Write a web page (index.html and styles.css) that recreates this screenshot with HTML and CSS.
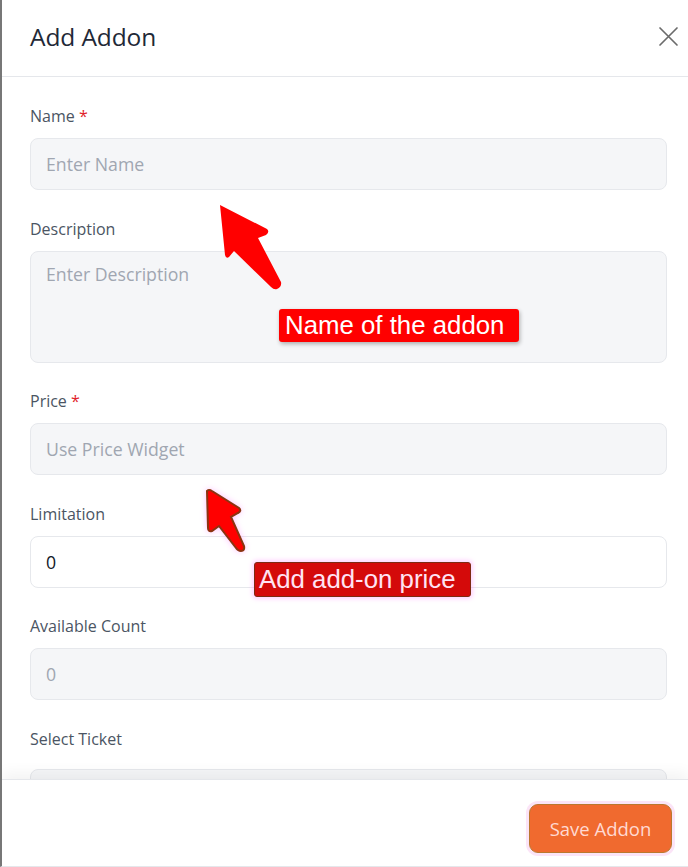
FILE: index.html
```html
<!DOCTYPE html>
<html lang="en">
<head>
    <meta charset="UTF-8">
    <title>Add Addon</title>
    <link rel="stylesheet" href="styles.css">
</head>
<body>
    <div class="modal">
        <div class="modal-header">
            <h2 class="modal-title">Add Addon</h2>
            <button class="close-btn" aria-label="Close">
                <svg width="22" height="22" viewBox="0 0 22 22">
                    <path d="M3 3 L20 20 M20 3 L3 20" stroke="#6b6b6b" stroke-width="1.7" fill="none" stroke-linecap="round"/>
                </svg>
            </button>
        </div>

        <div class="modal-body">
            <div class="field">
                <label>Name <span class="req">*</span></label>
                <input type="text" class="input" placeholder="Enter Name">
            </div>
            <div class="field">
                <label>Description</label>
                <textarea class="input textarea" placeholder="Enter Description"></textarea>
            </div>
            <div class="field">
                <label>Price <span class="req">*</span></label>
                <input type="text" class="input" placeholder="Use Price Widget">
            </div>
            <div class="field">
                <label>Limitation</label>
                <input type="text" class="input input-white" value="0">
            </div>
            <div class="field">
                <label>Available Count</label>
                <input type="text" class="input input-muted" value="0" readonly>
            </div>
            <div class="field">
                <label>Select Ticket</label>
                <div class="input select-box"></div>
            </div>
        </div>

        <div class="modal-footer">
            <button class="save-btn">Save Addon</button>
        </div>
    </div>

    <!-- annotation layer -->
    <svg class="arrows" width="688" height="867" viewBox="0 0 688 867">
        <path d="M220 205 L267 229 Q270 232 266 235 L258 238 L281 282 Q282 287 277 289 Q274 290 271 287 L234 251 L229 257 Q226 259 225 255 Z" fill="#ff0000"/>
        <path class="arrow-dark" d="M207 491 Q209 489 212 491 L239 508 Q242 511 238 513 L231 517 L244 546 Q245 551 241 551 Q238 551 236 548 L219 526 L212 531 Q208 532 208 528 Z" fill="#ff0000" stroke="#8a3410" stroke-width="2"/>
    </svg>
    <div class="note note-name">Name of the addon</div>
    <div class="note note-price">Add add-on price</div>
</body>
</html>
```

FILE: styles.css
```css
* {
    box-sizing: border-box;
}

body {
    margin: 0;
    background: #ffffff;
    font-family: 'Open Sans', 'Noto Sans', sans-serif;
    color: #4b5563;
}

.modal {
    height: 867px;
    border-left: 2px solid #777777;
    border-bottom: 1px solid #e5e7eb;
    display: flex;
    flex-direction: column;
    overflow: hidden;
}

.modal-header {
    height: 77px;
    flex-shrink: 0;
    display: flex;
    align-items: center;
    justify-content: space-between;
    padding: 0 8px 4px 28px;
    border-bottom: 1px solid #e5e7eb;
}

.modal-title {
    margin: 0;
    font-size: 24.5px;
    font-weight: 400;
    color: #1f2937;
    letter-spacing: -0.1px;
}

.close-btn {
    background: none;
    border: none;
    padding: 0;
    width: 24px;
    height: 24px;
    display: flex;
    align-items: center;
    justify-content: center;
    cursor: pointer;
}

.modal-body {
    flex: 1;
    overflow: hidden;
    padding: 29px 21px 0 28px;
}

.field {
    margin-bottom: 28.6px;
}

.field label {
    display: block;
    font-size: 16px;
    line-height: 20px;
    margin-bottom: 12px;
    color: #4b5563;
}

.req {
    color: #e11d2a;
}

.input {
    display: block;
    width: 100%;
    height: 52px;
    padding: 0 15px;
    border: 1px solid #e6e8ec;
    border-radius: 8px;
    background: #f5f6f8;
    font-family: inherit;
    font-size: 17.7px;
    color: #111827;
    outline: none;
}

.input::placeholder {
    color: #a0a6b1;
}

.textarea {
    height: 112px;
    padding-top: 10px;
    resize: none;
}

.input-white {
    background: #ffffff;
}

.input-muted {
    color: #a0a6b1;
}

.select-box {
    margin-top: 20px;
}

.modal-footer {
    height: 87px;
    flex-shrink: 0;
    display: flex;
    align-items: flex-start;
    justify-content: flex-end;
    padding: 24px 16px 0 0;
    border-top: 1px solid #e5e7eb;
    background: #ffffff;
    box-shadow: 0 -6px 14px rgba(0, 0, 0, 0.05);
    position: relative;
}

.save-btn {
    width: 143px;
    height: 49px;
    border: 1px solid #b9792f;
    border-radius: 9px;
    background: #f06a2f;
    color: #ffd9d2;
    font-family: inherit;
    font-size: 18.5px;
    font-weight: 500;
    box-shadow: 0 0 0 3px #fbe4f7;
    cursor: pointer;
}

/* annotations */
.arrows {
    position: absolute;
    top: 0;
    left: 0;
    pointer-events: none;
}

.arrow-dark {
    filter: drop-shadow(0 0 3px rgba(255, 120, 255, 0.45));
}

.note {
    position: absolute;
    font-family: 'Liberation Sans', Arial, sans-serif;
    font-size: 25.8px;
    line-height: 33px;
    white-space: nowrap;
}

.note-name {
    left: 279px;
    top: 309px;
    width: 240px;
    padding-left: 6px;
    background: #ff0000;
    color: #ffffff;
    border-radius: 3px;
    box-shadow: 1px 2px 4px rgba(0, 0, 0, 0.3);
}

.note-price {
    left: 254px;
    top: 562px;
    width: 217px;
    height: 35px;
    padding-left: 4px;
    background: #d40a0a;
    color: #ffe3f3;
    border: 1px solid #7c2b12;
    border-radius: 3px;
    box-shadow: 0 0 4px 2px rgba(255, 130, 255, 0.35);
}
```
